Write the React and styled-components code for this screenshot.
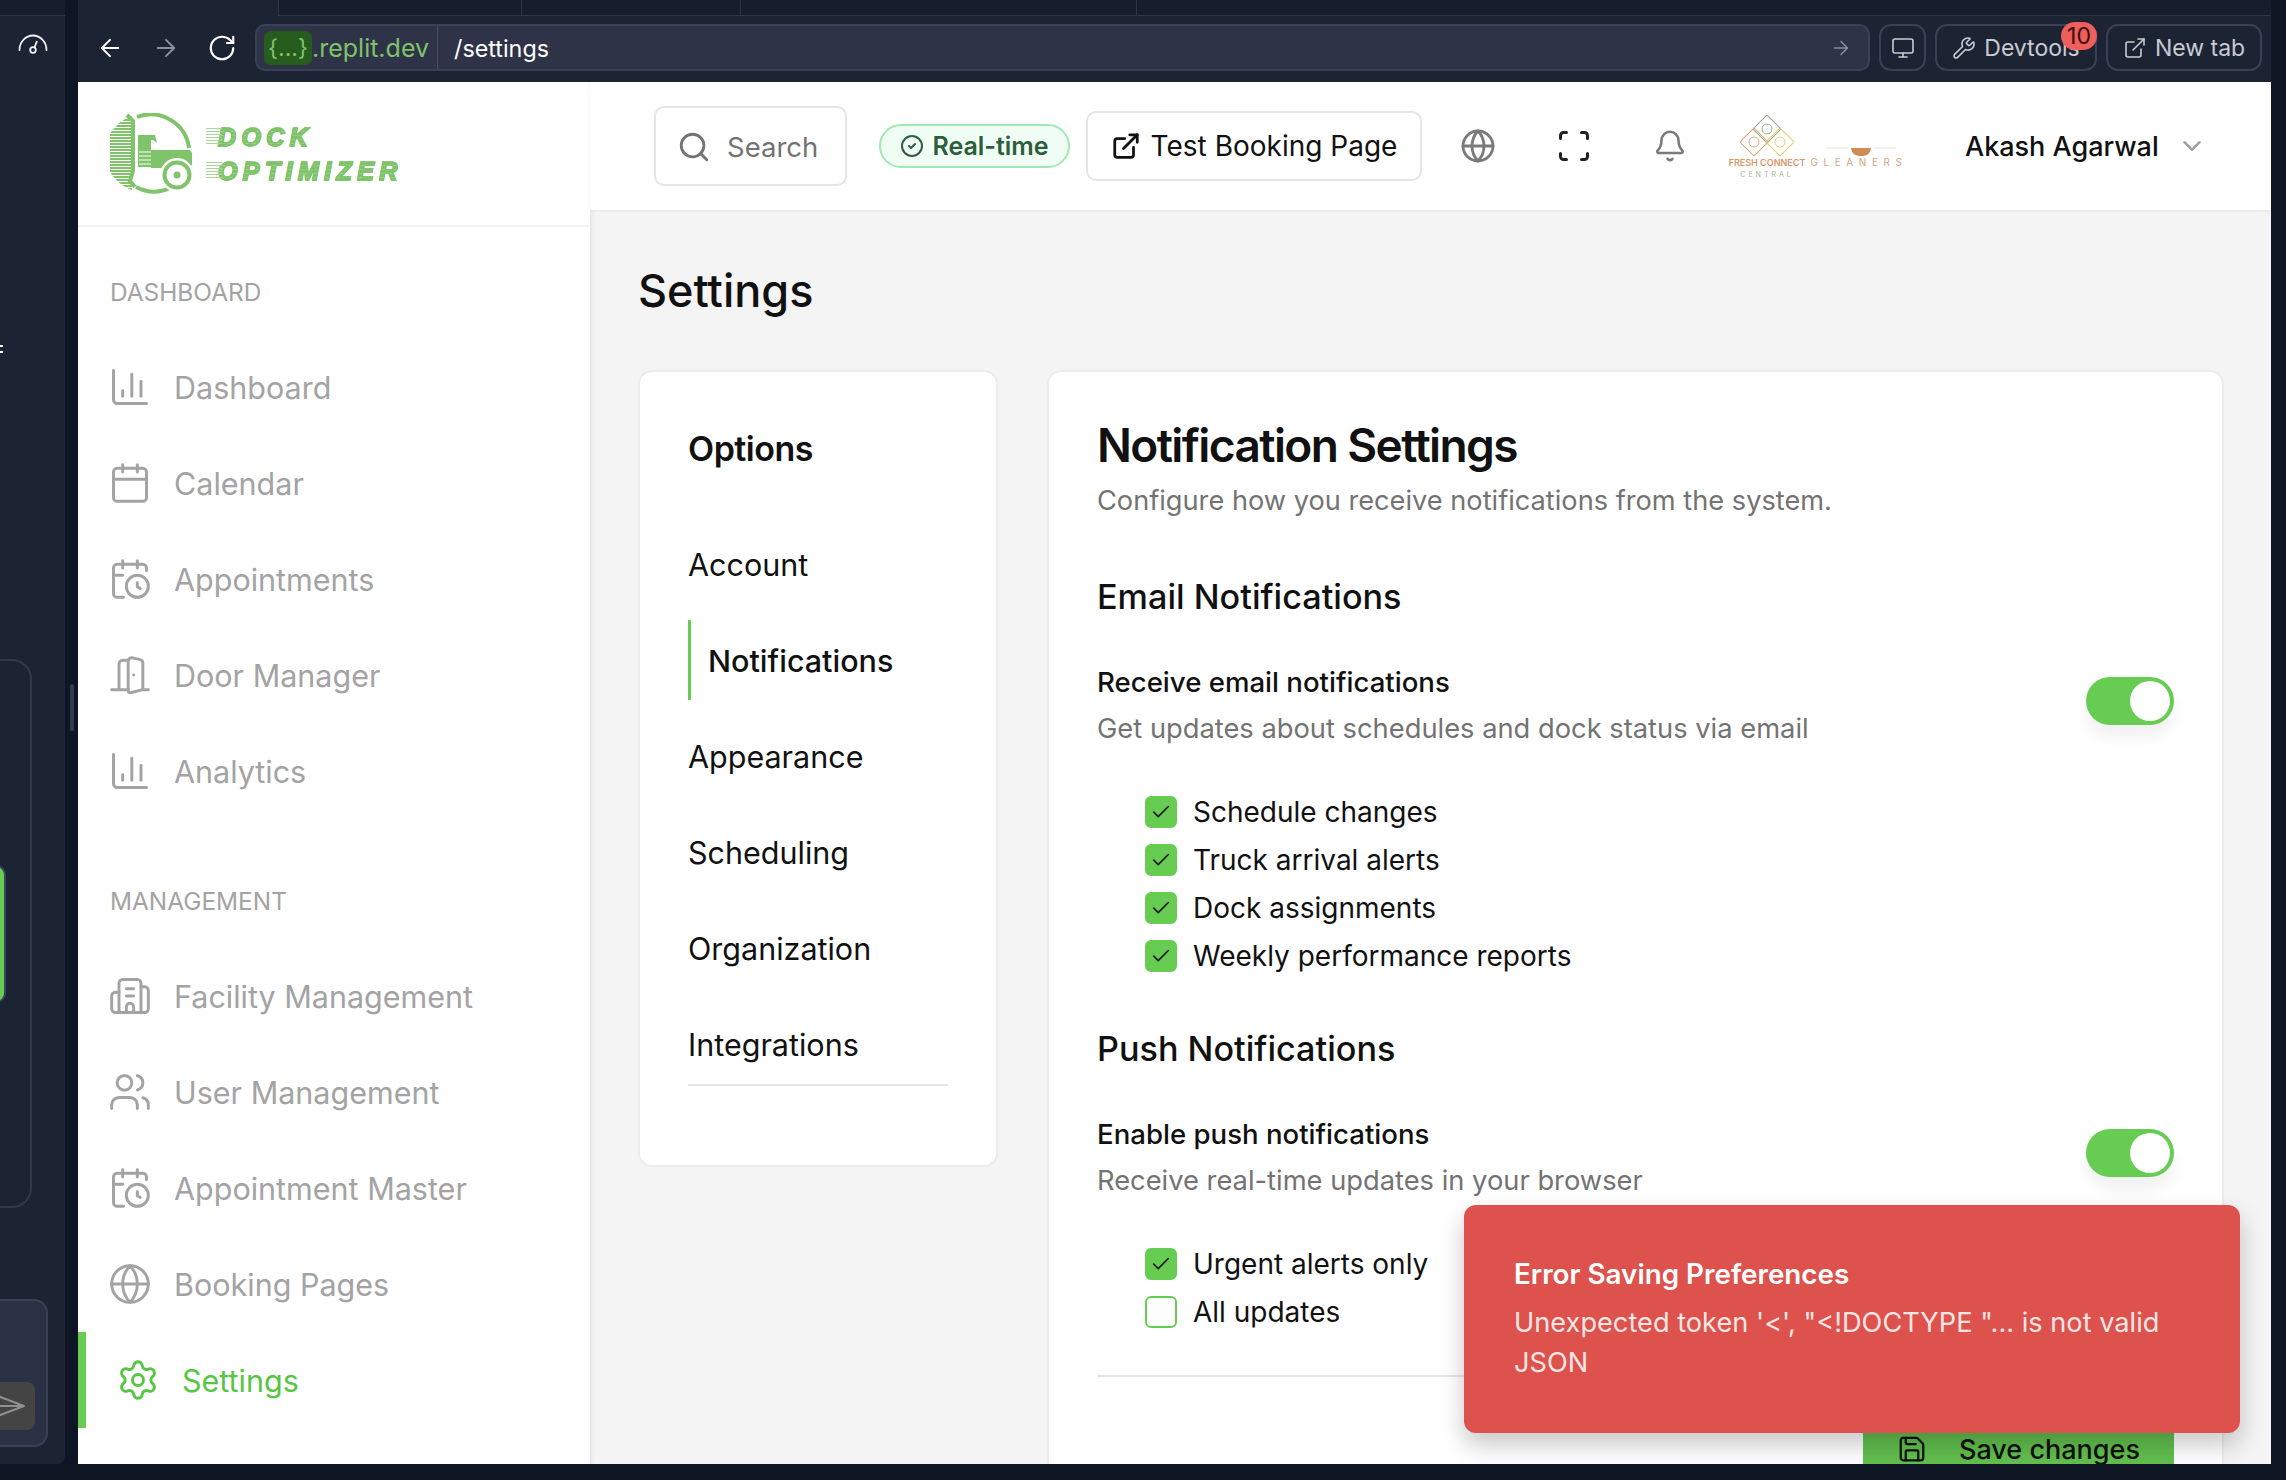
import React from "react";
import styled, { createGlobalStyle } from "styled-components";
import {
  ArrowLeft,
  ArrowRight,
  Bell,
  Building2,
  Calendar,
  CalendarClock,
  ChartColumn,
  Check,
  ChevronDown,
  CircleCheck,
  DoorOpen,
  ExternalLink,
  Globe,
  Monitor,
  RotateCw,
  Save,
  Scan,
  Search,
  Settings,
  Users,
  Wrench,
} from "lucide-react";

const GREEN = "#66cc52";
const MUTED = "#a3a3a3";
const CHROME = "#1c2333";

const dashboardLinks = [
  { label: "Dashboard", Icon: ChartColumn },
  { label: "Calendar", Icon: Calendar },
  { label: "Appointments", Icon: CalendarClock },
  { label: "Door Manager", Icon: DoorOpen },
  { label: "Analytics", Icon: ChartColumn },
];

const managementLinks = [
  { label: "Facility Management", Icon: Building2 },
  { label: "User Management", Icon: Users },
  { label: "Appointment Master", Icon: CalendarClock },
  { label: "Booking Pages", Icon: Globe },
  { label: "Settings", Icon: Settings, active: true },
];

const options = ["Account", "Notifications", "Appearance", "Scheduling", "Organization", "Integrations"];

const GlobalStyle = createGlobalStyle`
  html, body {
    margin: 0;
    padding: 0;
    background: #0f1624;
    font-family: Inter, "Liberation Sans", sans-serif;
  }
  * { box-sizing: border-box; }
`;

const Page = styled.div`
  display: flex;
  width: 2286px;
  height: 1480px;
  overflow: hidden;
  background: #0f1624;
`;

/* left replit rail, mostly cut off by the window edge */
const Rail = styled.aside`
  display: flex;
  flex: 0 0 78px;
  height: 1464px;
`;

const RailPane = styled.div`
  display: flex;
  flex-direction: column;
  width: 65px;
  background: ${CHROME};
  border-radius: 0 0 8px 0;
  overflow: hidden;
`;

const RailTop = styled.div`
  flex: 0 0 16px;
  border-bottom: 1px solid #2d3448;
  background: #181d2e;
`;

const RailIcon = styled.svg`
  flex: 0 0 20px;
  margin: 18px 0 0 18px;
`;

const RailDots = styled.div`
  flex: 0 0 8px;
  width: 3px;
  margin-top: 291px;
  border-top: 2px solid #fff;
  border-bottom: 2px solid #fff;
`;

const RailOutline = styled.div`
  flex: 0 0 549px;
  width: 100px;
  margin: 306px 0 0 -68px;
  padding-top: 204px;
  border: 2px solid #303949;
  border-radius: 20px;
`;

const RailGreen = styled.div`
  width: 72px;
  height: 138px;
  background: ${GREEN};
  border: 2px solid #3b4658;
  border-radius: 10px;
`;

const RailComposer = styled.div`
  display: flex;
  flex: 0 0 148px;
  align-items: flex-end;
  justify-content: flex-end;
  width: 100px;
  margin: 91px 0 0 -52px;
  padding: 0 11px 15px 0;
  background: #2b3145;
  border: 2px solid #3a4055;
  border-radius: 14px;
`;

const RailSend = styled.div`
  display: flex;
  align-items: center;
  justify-content: flex-end;
  width: 70px;
  height: 48px;
  padding-right: 10px;
  background: #444;
  border-radius: 8px;
`;

const RailGutter = styled.div`
  flex: 0 0 13px;
  padding: 684px 0 0 5px;
  background: #0e1525;
`;

const RailHandle = styled.div`
  width: 4px;
  height: 47px;
  background: #333b4d;
  border-radius: 2px;
`;

const Shell = styled.div`
  display: flex;
  flex-direction: column;
  width: 2193px;
`;

const Chrome = styled.header`
  display: flex;
  flex-direction: column;
  height: 82px;
  background: ${CHROME};
`;

const TabStrip = styled.div`
  display: flex;
  height: 16px;
  padding-left: 200px;
`;

const TabStripInner = styled.div`
  display: flex;
  flex: 1;
  background: #181d2e;
  border-left: 1px solid #2d3448;
  border-bottom: 1px solid #2d3448;
`;

const TabSlot = styled.div`
  width: ${(p) => p.$w}px;
  border-right: 1px solid #2d3448;
`;

const Toolbar = styled.div`
  display: flex;
  align-items: center;
  height: 47px;
  margin-top: 8px;
  padding: 0 9px 0 4px;
  color: #fff;
`;

const NavButton = styled.div`
  display: flex;
  flex: 0 0 56px;
  justify-content: center;
  color: ${(p) => (p.$dim ? "#8b8f98" : "#fff")};
`;

const AddressBar = styled.div`
  display: flex;
  flex: 0 0 1615px;
  align-items: center;
  height: 47px;
  margin: 0 9px 0 5px;
  padding: 0 16px 0 7px;
  background: #2e3348;
  border: 2px solid #3a4055;
  border-radius: 10px;
  font-size: 23.3px;
  color: #fff;
`;

const Host = styled.div`
  display: flex;
  align-items: center;
  height: 43px;
  padding-right: 8px;
  border-right: 1px solid #454b60;
  color: #7fc36a;
  font-size: 25px;
`;

const HostToken = styled.span`
  display: flex;
  align-items: center;
  height: 34px;
  padding: 0 4px;
  background: #265c1e;
  border-radius: 7px;
  font-size: 23.3px;
`;

const Path = styled.span`
  flex: 1;
  padding: 1px 0 0 16px;
`;

const GoArrow = styled.div`
  display: flex;
  color: #8b8f98;
`;

const ChromeButton = styled.div`
  position: relative;
  display: flex;
  flex: 0 0 ${(p) => p.$w}px;
  align-items: center;
  justify-content: center;
  gap: 8px;
  height: 47px;
  margin-right: 9px;
  color: #c8cbd2;
  border: 2px solid #3a4055;
  border-radius: 12px;
  font-size: 23px;
  &:last-child { margin-right: 0; }
`;

const CountBadge = styled.span`
  position: absolute;
  top: -4px;
  right: -2px;
  display: flex;
  align-items: center;
  justify-content: center;
  width: 36px;
  height: 28px;
  color: #3a0d0b;
  background: #ee5e5a;
  border-radius: 14px;
  font-size: 23px;
`;

const AppFrame = styled.div`
  position: relative;
  display: flex;
  height: 1382px;
  overflow: hidden;
  background: #f4f4f5;
`;

const Sidebar = styled.nav`
  flex: 0 0 512px;
  background: #fff;
  box-shadow: 0 2px 6px rgba(0, 0, 0, 0.12);
`;

const LogoHeader = styled.div`
  display: flex;
  align-items: center;
  gap: 12px;
  height: 145px;
  padding: 0 0 0 32px;
  border-bottom: 2px solid #f2f2f2;
`;

const LogoWords = styled.div`
  display: flex;
  flex-direction: column;
  gap: 8px;
`;

const LogoWord = styled.span`
  position: relative;
  padding-left: 12px;
  font-family: "Liberation Sans", sans-serif;
  font-size: 25px;
  line-height: 26px;
  font-weight: 700;
  font-style: italic;
  letter-spacing: 5.4px;
  color: transparent;
  background: repeating-linear-gradient(180deg, #7fc36a 0 3px, #a5d696 3px 4px);
  -webkit-background-clip: text;
  background-clip: text;
  -webkit-text-stroke: 1.5px #7fc36a;
  &::before {
    content: "";
    position: absolute;
    left: 0;
    top: 4px;
    width: 16px;
    height: 18px;
    background: repeating-linear-gradient(180deg, #a5d696 0 1px, transparent 1px 3px);
  }
`;

const SectionLabel = styled.div`
  height: 24px;
  margin: ${(p) => p.$top}px 0 35px 32px;
  color: ${MUTED};
  font-size: 24.4px;
  line-height: 24px;
  font-weight: 400;
`;

const NavItem = styled.a`
  display: flex;
  align-items: center;
  gap: 22px;
  height: 96px;
  padding-left: 30px;
  border-left: ${(p) => (p.$active ? `8px solid ${GREEN}` : "none")};
  color: ${(p) => (p.$active ? "#58c544" : MUTED)};
  font-size: 30.5px;
`;

const Main = styled.main`
  display: flex;
  flex: 1;
  flex-direction: column;
  min-width: 0;
`;

const TopBar = styled.div`
  display: flex;
  flex: 0 0 128px;
  align-items: center;
  padding-left: 64px;
  background: #fff;
  box-shadow: 0 1px 3px rgba(0, 0, 0, 0.05);
`;

const SearchBox = styled.div`
  display: flex;
  align-items: center;
  gap: 16px;
  width: 193px;
  height: 80px;
  margin-right: 32px;
  padding: 1px 0 0 21px;
  color: #737373;
  border: 2px solid #e5e5e5;
  border-radius: 10px;
  font-size: 27.5px;
`;

const LivePill = styled.div`
  display: flex;
  align-items: center;
  justify-content: center;
  gap: 8px;
  width: 191px;
  height: 44px;
  margin-right: 16px;
  color: #2c5e3c;
  background: #f0fdf4;
  border: 2px solid #a2e8b4;
  border-radius: 22px;
  font-size: 25px;
  font-weight: 600;
`;

const BookingLink = styled.div`
  display: flex;
  align-items: center;
  justify-content: center;
  gap: 10px;
  width: 336px;
  height: 70px;
  color: #111;
  border: 2px solid #e5e5e5;
  border-radius: 10px;
  font-size: 28px;
  font-weight: 400;
`;

const HeaderIcon = styled.div`
  display: flex;
  justify-content: center;
  width: ${(p) => p.$w || 96}px;
  color: ${(p) => p.$color || "#7a7a7a"};
`;

const PartnerLogo = styled.svg`
  flex: 0 0 176px;
`;

const UserName = styled.div`
  margin-left: 63px;
  color: #111;
  font-size: 27px;
  font-weight: 500;
`;

const Chevron = styled.div`
  display: flex;
  margin-left: 18px;
  color: #a3a3a3;
`;

const Content = styled.div`
  flex: 1;
  padding: 0 47px 0 48px;
  overflow: hidden;
`;

const PageTitle = styled.h1`
  height: 103px;
  margin: 57px 0 0;
  color: #111;
  font-size: 45px;
  line-height: 48px;
  font-weight: 500;
`;

const Columns = styled.div`
  display: flex;
  align-items: flex-start;
  gap: 49px;
`;

const Card = styled.section`
  background: #fff;
  border: 2px solid #ececec;
  border-radius: 14px;
`;

const OptionsCard = styled(Card)`
  flex: 0 0 360px;
  height: 797px;
  padding: 57px 48px 0;
`;

const OptionsTitle = styled.h2`
  height: 78px;
  margin: 0 0 9px;
  color: #111;
  font-size: 34px;
  line-height: 40px;
  font-weight: 600;
  letter-spacing: -0.5px;
`;

const OptionItem = styled.div`
  display: flex;
  align-items: center;
  height: 96px;
  color: #111;
  font-size: 30.5px;
`;

const OptionMark = styled.span`
  display: flex;
  align-items: center;
  height: 80px;
  padding-left: ${(p) => (p.$active ? "17px" : "0")};
  border-left: ${(p) => (p.$active ? `3px solid ${GREEN}` : "none")};
  font-weight: ${(p) => (p.$active ? 500 : 400)};
`;

const OptionsRule = styled.div`
  height: 2px;
  margin-top: -8px;
  background: #e5e5e5;
`;

const SettingsCard = styled(Card)`
  flex: 1;
  height: 1200px;
  padding: 45px 48px 0;
`;

const SettingsTitle = styled.h2`
  margin: 0;
  color: #111;
  font-size: 46px;
  line-height: 56px;
  font-weight: 600;
  letter-spacing: -1.6px;
`;

const Subtitle = styled.p`
  margin: 8px 0 0;
  color: #737373;
  font-size: 27.2px;
  line-height: 40px;
`;

const GroupTitle = styled.h3`
  margin: ${(p) => p.$top}px 0 0;
  color: #111;
  font-size: 34.2px;
  line-height: 44px;
  font-weight: 500;
`;

const ToggleRow = styled.div`
  display: flex;
  align-items: flex-start;
  justify-content: space-between;
  margin-top: 43px;
`;

const ToggleTitle = styled.div`
  color: #111;
  font-size: 27.6px;
  line-height: 40px;
  font-weight: 500;
`;

const ToggleHint = styled.div`
  margin-top: 7px;
  color: #737373;
  font-size: 27.3px;
  line-height: 40px;
`;

const Switch = styled.div`
  display: flex;
  justify-content: flex-end;
  width: 88px;
  height: 48px;
  margin-top: 15px;
  padding: 4px;
  background: ${GREEN};
  border-radius: 24px;
  box-shadow: 0 12px 16px rgba(0, 0, 0, 0.06);
`;

const Knob = styled.span`
  width: 40px;
  height: 40px;
  background: #fff;
  border-radius: 50%;
`;

const CheckList = styled.div`
  display: flex;
  flex-direction: column;
  gap: 16px;
  margin: ${(p) => p.$top}px 0 0 48px;
`;

const CheckRow = styled.label`
  display: flex;
  align-items: center;
  gap: 16px;
  color: #111;
  font-size: 28px;
  line-height: 32px;
`;

const CheckBox = styled.span`
  display: flex;
  align-items: center;
  justify-content: center;
  width: 32px;
  height: 32px;
  color: #111;
  background: ${(p) => (p.$on ? GREEN : "#fff")};
  border: 2px solid ${GREEN};
  border-radius: 6px;
`;

const Divider = styled.div`
  height: 2px;
  margin-top: 47px;
  background: #e5e5e5;
`;

const Actions = styled.div`
  display: flex;
  justify-content: flex-end;
  margin-top: 38px;
`;

const SaveButton = styled.div`
  display: flex;
  align-items: center;
  justify-content: center;
  gap: 32px;
  width: 311px;
  height: 68px;
  color: #111;
  background: #62bf4e;
  border-radius: 4px;
  font-size: 27px;
  font-weight: 500;
`;

const Toast = styled.div`
  position: absolute;
  right: 31px;
  bottom: 31px;
  width: 776px;
  height: 228px;
  padding: 50px 48px 0 50px;
  color: #fff;
  background: #dd524c;
  border-radius: 12px;
  box-shadow: 0 12px 24px rgba(0, 0, 0, 0.22);
`;

const ToastTitle = styled.div`
  font-size: 27.8px;
  line-height: 38px;
  font-weight: 600;
`;

const ToastBody = styled.div`
  margin-top: 10px;
  color: #fbe6e5;
  font-size: 27.2px;
  line-height: 40px;
`;

const TruckLogo = () => (
  <svg width="84" height="82" viewBox="0 0 84 82" fill="none">
    <defs>
      <pattern id="truck-stripes" width="4" height="3" patternUnits="userSpaceOnUse">
        <rect width="4" height="2" fill="#7fc36a" />
      </pattern>
    </defs>
    <path d="M22 3A39 39 0 0 0 22 77Z" fill="url(#truck-stripes)" />
    <path d="M27 4A38.5 38.5 0 0 1 79 35" stroke="#7fc36a" strokeWidth="4" />
    <path d="M60 75A38.5 38.5 0 0 1 26 74" stroke="#7fc36a" strokeWidth="4" />
    <path d="M17 2L23 8V58L20 68L25 74" stroke="#7fc36a" strokeWidth="4" />
    <path
      d="M28 22H45L47 30L43 27H41V37H80L82 40V52L78 54A17 17 0 0 0 52 55H41V54H28Z"
      fill="#7fc36a"
    />
    <path d="M29 39H41M29 43H41M29 47H41M29 51H41" stroke="#fff" strokeWidth="1" />
    <circle cx="67" cy="62" r="17" fill="#fff" />
    <circle cx="67" cy="62" r="12.5" stroke="#7fc36a" strokeWidth="4" />
    <circle cx="67" cy="62" r="3.5" fill="#7fc36a" />
  </svg>
);

const Diamond = ({ x, y, color }) => (
  <g transform={`translate(${x} ${y}) rotate(45)`} fill="none" stroke={color} strokeWidth="1">
    <rect x="-10" y="-10" width="20" height="20" rx="2" />
    <circle r="5" strokeWidth="0.9" />
  </g>
);

const FreshConnect = () => (
  <PartnerLogo width="176" height="64" viewBox="0 0 176 64">
    <Diamond x={41} y={15} color="#8fae86" />
    <Diamond x={28} y={28} color="#e0a27a" />
    <Diamond x={54} y={28} color="#e8c96e" />
    <path d="M125 34h20c-1 6-4 8-10 8s-9-2-10-8Z" fill="#cf8a55" />
    <path d="M100 34h22M148 34h22" stroke="#eee3d8" strokeWidth="1" />
    <text x="41" y="52" textAnchor="middle" fontFamily="Inter" fontSize="9" fontWeight="600" fill="#d9986b">
      FRESH CONNECT
    </text>
    <text x="41" y="63" textAnchor="middle" fontFamily="Inter" fontSize="7" letterSpacing="3" fill="#9db894">
      CENTRAL
    </text>
    <text x="133" y="52" textAnchor="middle" fontFamily="Inter" fontSize="10" letterSpacing="5.6" fill="#d9a47e">
      GLEANERS
    </text>
  </PartnerLogo>
);

const NavGroup = ({ links }) =>
  links.map(({ label, Icon, active }) => (
    <NavItem key={label} $active={active}>
      <Icon size={44} strokeWidth={1.6} />
      {label}
    </NavItem>
  ));

const Checks = ({ items, top }) => (
  <CheckList $top={top}>
    {items.map(({ label, on }) => (
      <CheckRow key={label}>
        <CheckBox $on={on}>{on && <Check size={22} strokeWidth={1.7} />}</CheckBox>
        {label}
      </CheckRow>
    ))}
  </CheckList>
);

const Toggle = ({ title, hint }) => (
  <ToggleRow>
    <div>
      <ToggleTitle>{title}</ToggleTitle>
      <ToggleHint>{hint}</ToggleHint>
    </div>
    <Switch>
      <Knob />
    </Switch>
  </ToggleRow>
);

export default function App() {
  return (
    <Page>
      <GlobalStyle />
      <Rail>
        <RailPane>
          <RailTop />
          <RailIcon width="30" height="20" viewBox="0 0 30 20" fill="none" stroke="#f2f2f2" strokeWidth="1.8">
            <path d="M1.5 16A13.5 14.5 0 0 1 28.5 16" strokeLinecap="round" />
            <circle cx="15" cy="16" r="2.8" />
            <path d="M16.5 13.5L19 7" />
          </RailIcon>
          <RailDots />
          <RailOutline>
            <RailGreen />
          </RailOutline>
          <RailComposer>
            <RailSend>
              <svg width="36" height="28" viewBox="0 0 36 28" fill="none" stroke="#8f8f8f" strokeWidth="2">
                <path d="M1 1L35 14L1 27L8 14ZM8 14H35" strokeLinejoin="round" />
              </svg>
            </RailSend>
          </RailComposer>
        </RailPane>
        <RailGutter>
          <RailHandle />
        </RailGutter>
      </Rail>

      <Shell>
        <Chrome>
          <TabStrip>
            <TabStripInner>
              <TabSlot $w={243} />
              <TabSlot $w={219} />
              <TabSlot $w={396} />
            </TabStripInner>
          </TabStrip>
          <Toolbar>
            <NavButton>
              <ArrowLeft size={28} strokeWidth={1.7} />
            </NavButton>
            <NavButton $dim>
              <ArrowRight size={28} strokeWidth={1.7} />
            </NavButton>
            <NavButton>
              <RotateCw size={30} strokeWidth={1.7} />
            </NavButton>
            <AddressBar>
              <Host>
                <HostToken>{"{...}"}</HostToken>.replit.dev
              </Host>
              <Path>/settings</Path>
              <GoArrow>
                <ArrowRight size={22} strokeWidth={1.6} />
              </GoArrow>
            </AddressBar>
            <ChromeButton $w={47}>
              <Monitor size={24} strokeWidth={1.6} />
            </ChromeButton>
            <ChromeButton $w={162}>
              <Wrench size={24} strokeWidth={1.6} />
              Devtools
              <CountBadge>10</CountBadge>
            </ChromeButton>
            <ChromeButton $w={156}>
              <ExternalLink size={24} strokeWidth={1.6} />
              New tab
            </ChromeButton>
          </Toolbar>
        </Chrome>

        <AppFrame>
          <Sidebar>
            <LogoHeader>
              <TruckLogo />
              <LogoWords>
                <LogoWord>DOCK</LogoWord>
                <LogoWord>OPTIMIZER</LogoWord>
              </LogoWords>
            </LogoHeader>
            <SectionLabel $top={53}>DASHBOARD</SectionLabel>
            <NavGroup links={dashboardLinks} />
            <SectionLabel $top={70}>MANAGEMENT</SectionLabel>
            <NavGroup links={managementLinks} />
          </Sidebar>

          <Main>
            <TopBar>
              <SearchBox>
                <Search size={34} strokeWidth={2} />
                Search
              </SearchBox>
              <LivePill>
                <CircleCheck size={24} strokeWidth={2} />
                Real-time
              </LivePill>
              <BookingLink>
                <ExternalLink size={30} strokeWidth={2.2} />
                Test Booking Page
              </BookingLink>
              <HeaderIcon $w={112}>
                <Globe size={36} strokeWidth={1.9} />
              </HeaderIcon>
              <HeaderIcon $w={80} $color="#222">
                <Scan size={36} strokeWidth={2} />
              </HeaderIcon>
              <HeaderIcon $w={112}>
                <Bell size={34} strokeWidth={1.8} />
              </HeaderIcon>
              <FreshConnect />
              <UserName>Akash Agarwal</UserName>
              <Chevron>
                <ChevronDown size={30} strokeWidth={2} />
              </Chevron>
            </TopBar>

            <Content>
              <PageTitle>Settings</PageTitle>
              <Columns>
                <OptionsCard>
                  <OptionsTitle>Options</OptionsTitle>
                  {options.map((name) => (
                    <OptionItem key={name}>
                      <OptionMark $active={name === "Notifications"}>{name}</OptionMark>
                    </OptionItem>
                  ))}
                  <OptionsRule />
                </OptionsCard>

                <SettingsCard>
                  <SettingsTitle>Notification Settings</SettingsTitle>
                  <Subtitle>Configure how you receive notifications from the system.</Subtitle>
                  <GroupTitle $top={54}>Email Notifications</GroupTitle>
                  <Toggle
                    title="Receive email notifications"
                    hint="Get updates about schedules and dock status via email"
                  />
                  <Checks
                    top={47}
                    items={[
                      { label: "Schedule changes", on: true },
                      { label: "Truck arrival alerts", on: true },
                      { label: "Dock assignments", on: true },
                      { label: "Weekly performance reports", on: true },
                    ]}
                  />
                  <GroupTitle $top={55}>Push Notifications</GroupTitle>
                  <Toggle
                    title="Enable push notifications"
                    hint="Receive real-time updates in your browser"
                  />
                  <Checks
                    top={47}
                    items={[
                      { label: "Urgent alerts only", on: true },
                      { label: "All updates", on: false },
                    ]}
                  />
                  <Divider />
                  <Actions>
                    <SaveButton>
                      <Save size={30} strokeWidth={1.8} />
                      Save changes
                    </SaveButton>
                  </Actions>
                </SettingsCard>
              </Columns>
            </Content>
          </Main>

          <Toast>
            <ToastTitle>Error Saving Preferences</ToastTitle>
            <ToastBody>Unexpected token '&lt;', "&lt;!DOCTYPE "... is not valid JSON</ToastBody>
          </Toast>
        </AppFrame>
      </Shell>
    </Page>
  );
}
